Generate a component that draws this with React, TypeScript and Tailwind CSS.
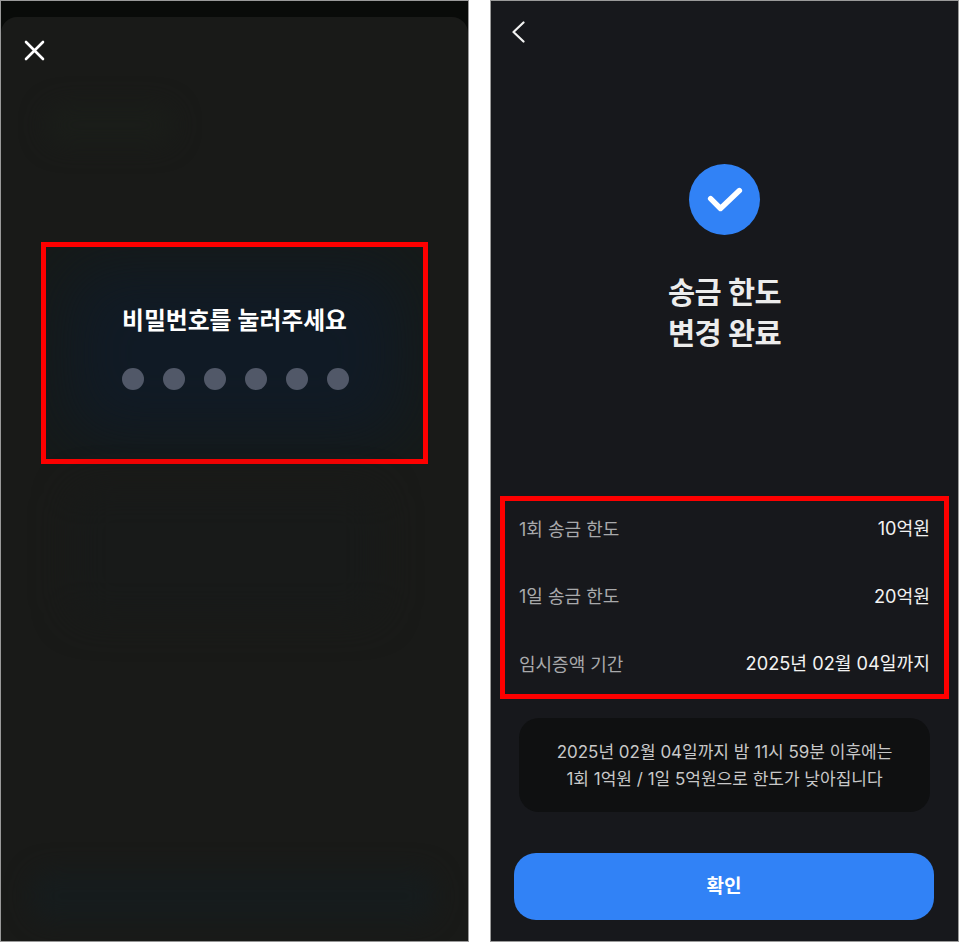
const font = 'font-["Inter","Noto_Sans_CJK_KR",sans-serif]'

function LimitRow({ label, value }: { label: string; value: string }) {
  return (
    <div className="flex h-[34px] items-center justify-between">
      <span className="text-[18px] text-[#a8a9ab]">{label}</span>
      <span className="text-[18.2px] text-[#f2f2f2]">{value}</span>
    </div>
  )
}

function PasswordPanel() {
  return (
    <section className="flex h-[942px] w-[469px] shrink-0 flex-col border border-[#9a9a9a] bg-[#090b09] pt-[16px]">
      <div className="flex min-h-0 flex-1 flex-col rounded-t-[16px] bg-[#191a18]">
        <button type="button" aria-label="닫기" className="mt-[23px] ml-[23px] h-[21px] w-[21px] text-white">
          <svg viewBox="0 0 21 21" className="h-[21px] w-[21px]" fill="none" stroke="currentColor" strokeWidth="2.6" strokeLinecap="round">
            <path d="M2 2 L19 19 M19 2 L2 19" />
          </svg>
        </button>
        <div className="mt-[44px] ml-[44px] h-[40px] w-[130px] rounded-[20px] bg-[#1a1d19] blur-[12px]" />

        <div className="mt-[97px] ml-[40px] flex h-[222px] w-[387px] flex-col items-center border-[5px] border-[#fe0000] bg-[#111b26] shadow-[inset_0_0_70px_20px_#161a18]">
          <h2 className="mt-[56px] text-[23.8px] leading-[36px] font-semibold text-white">
            비밀번호를 눌러주세요
          </h2>
          <div className="mt-[29px] flex gap-[19px] pl-[1px]">
            {[0, 1, 2, 3, 4, 5].map((dot) => (
              <span key={dot} className="h-[22px] w-[22px] rounded-full bg-[#515868]" />
            ))}
          </div>
        </div>

        <div className="mt-[24px] ml-[70px] h-[130px] w-[310px] rounded-[20px] bg-[#181a19] blur-[18px]" />
        <div className="mt-auto mb-[20px] ml-[30px] h-[50px] w-[405px] rounded-[20px] bg-[#161c1d] blur-[12px]" />
      </div>
    </section>
  )
}

function DonePanel() {
  return (
    <section className="flex h-[942px] w-[469px] shrink-0 flex-col border border-[#9a9a9a] bg-[#17181c] text-white">
      <button type="button" aria-label="뒤로" className="mt-[20px] ml-[20px] h-[22px] w-[14px] text-[#f2f2f2]">
        <svg viewBox="0 0 14 22" className="h-[22px] w-[14px]" fill="none" stroke="currentColor" strokeWidth="2.2" strokeLinecap="round" strokeLinejoin="round">
          <path d="M12.5 1.5 L2.5 11 L12.5 20.5" />
        </svg>
      </button>

      <div className="mt-[121px] flex flex-col items-center">
        <span className="flex h-[71px] w-[71px] items-center justify-center rounded-full bg-[#3182f6]">
          <svg viewBox="0 0 40 30" className="h-[27px] w-[38px]" fill="none" stroke="white" strokeWidth="6" strokeLinecap="round" strokeLinejoin="round">
            <path d="M4 14 L15 25 L36 5" />
          </svg>
        </span>
        <h1 className="mt-[37px] text-center text-[29.5px] leading-[41px] font-semibold tracking-[-0.6px] text-[#ececec]">
          송금 한도
          <br />
          변경 완료
        </h1>
      </div>

      <div className="mt-[142px] ml-[9px] h-[203px] w-[449px] border-[5px] border-[#fe0000] px-[14px] pt-[11px]">
        <div className="flex flex-col gap-[33.5px]">
          <LimitRow label="1회 송금 한도" value="10억원" />
          <LimitRow label="1일 송금 한도" value="20억원" />
          <LimitRow label="임시증액 기간" value="2025년 02월 04일까지" />
        </div>
      </div>

      <div className="mx-[28px] mt-[19px] flex h-[94px] flex-col items-center justify-center rounded-[20px] bg-[#0f1011] pt-[1px] text-[17px] leading-[27px] text-[#c8c8c8]">
        <p>2025년 02월 04일까지 밤 11시 59분 이후에는</p>
        <p>1회 1억원 / 1일 5억원으로 한도가 낮아집니다</p>
      </div>

      <button type="button" className="mr-[24px] ml-[23px] mt-[41px] h-[67px] rounded-[22px] bg-[#3182f6] pt-[2px] text-[19px] font-semibold text-white">
        확인
      </button>
    </section>
  )
}

export default function App() {
  return (
    <div className={`flex h-[942px] w-[959px] gap-[21px] overflow-hidden bg-white ${font}`}>
      <PasswordPanel />
      <DonePanel />
    </div>
  )
}
